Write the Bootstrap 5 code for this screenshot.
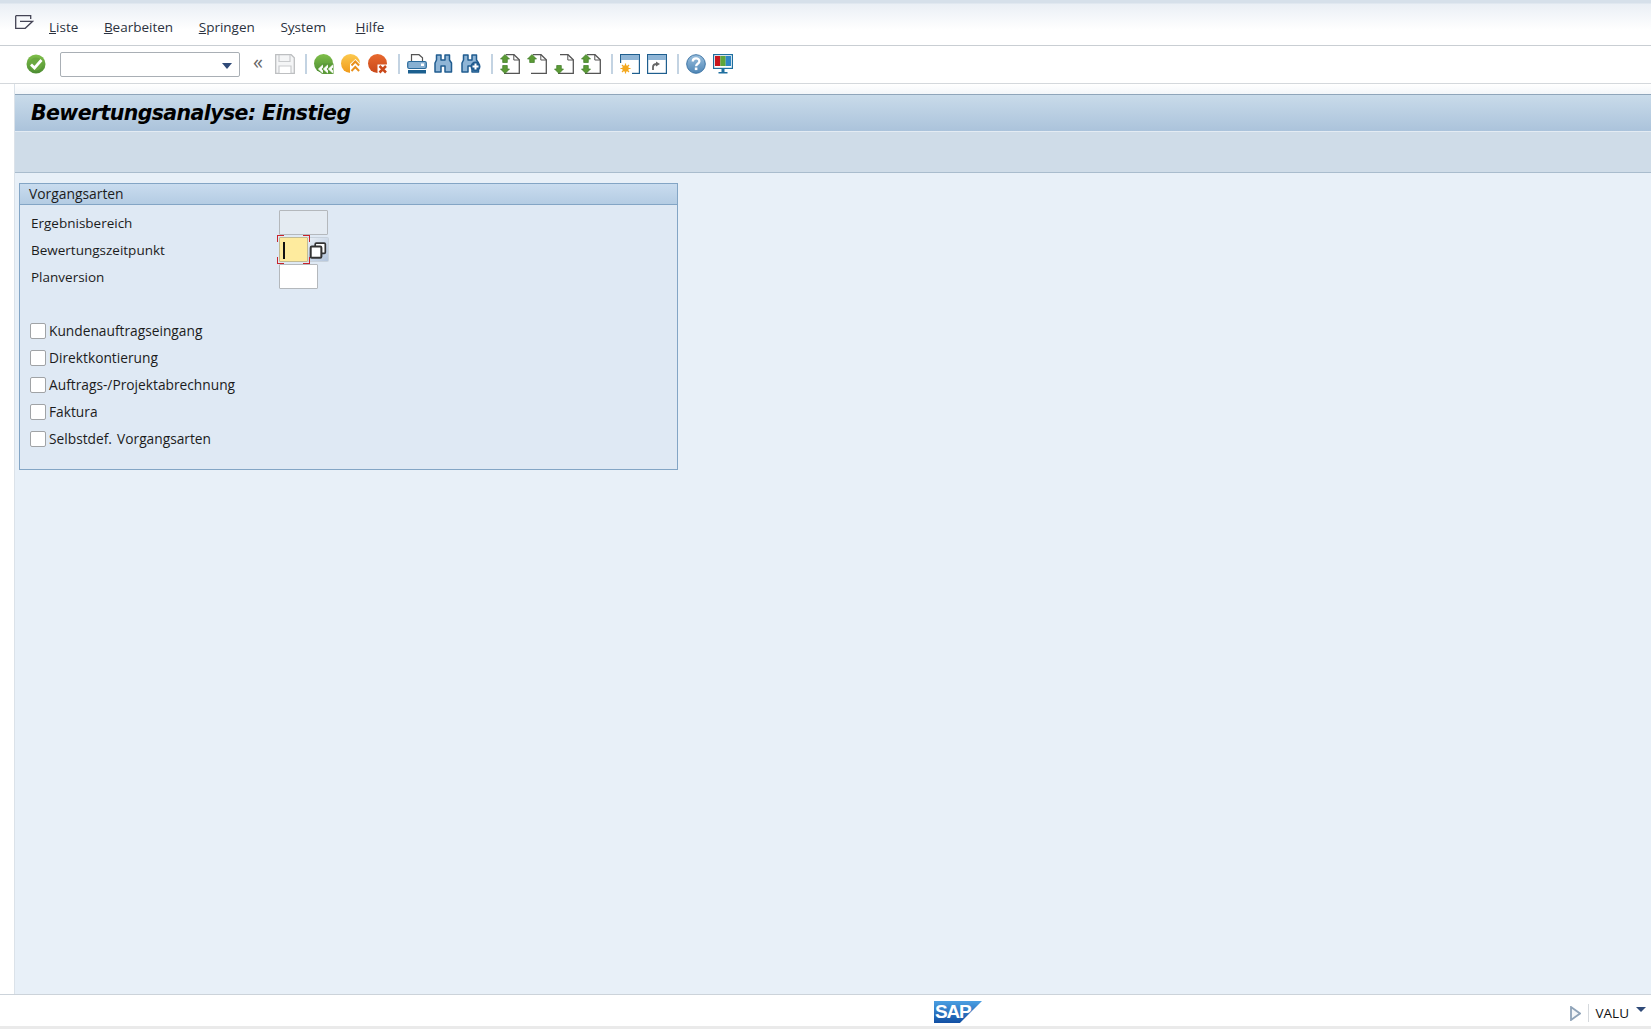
<!DOCTYPE html>
<html lang="de">
<head>
<meta charset="utf-8">
<title>Bewertungsanalyse: Einstieg</title>
<link rel="stylesheet" href="https://cdn.jsdelivr.net/npm/bootstrap@5.3.0/dist/css/bootstrap.min.css">
<style>
html,body{height:100%;margin:0}
body{font-family:"Open Sans","Liberation Sans",sans-serif;font-size:13.5px;color:#1c1c1c;background:#fff;overflow:hidden}
.sap-shell{height:1029px}
.sap-menu{height:46px;flex:none;background:linear-gradient(#d6e0ea 0,#d6e0ea 3px,#eaeff5 4px,#fff 30px);border-bottom:1px solid #c9ced3;padding:15px 0 0 15px}
.sap-menu-ico{width:19px;height:15px;flex:none}
.sap-menu-items{gap:25.6px;margin-left:15px;padding-top:3px;line-height:19px;color:#2b3240}
.sap-tools{height:38px;flex:none;background:#fff;border-bottom:1px solid #d4d8dc;padding:8px 0 0 26px;gap:7px}
.sap-tools svg{width:20px;height:20px;flex:none;display:block}
.sap-combo{width:180px;height:25px;flex:none;border:1px solid #a9afb5;border-radius:2px;background:#fff;margin:-2px 5px 0 7px;position:relative}
.sap-combo i{position:absolute;right:7px;top:10px;border:5.500px solid transparent;border-top:6px solid #2f4a78;border-bottom:0}
.sap-back{width:12px;flex:none;color:#666;font-size:20px;line-height:15px;margin-right:4px;text-align:center}
.sap-sep{width:2px;height:20px;flex:none;background:#c3d3e2;margin-left:3px}
.sap-main{flex:1 1 auto;min-height:0}
.sap-gutter{width:15px;flex:none;background:#fff;border-right:1px solid #dbe2e9}
.sap-work{flex:1 1 auto;min-width:0;background:#e8f0f8;padding-top:10px;background-image:linear-gradient(#fff,#f3f6f9 10px,#f3f6f9 10px);background-repeat:no-repeat;background-size:100% 10px}
.sap-title{height:38px;background:linear-gradient(#c9dbea,#abc3db);border-top:1px solid #8fa5ba;border-bottom:1px solid #e3ebf3;padding-left:16px;font:italic 700 20.5px/36px "DejaVu Sans",sans-serif;color:#000;letter-spacing:-.6px}
.sap-band{height:41px;background:#cfdce8;border-bottom:1px solid #a9bccd}
.sap-group{width:659px;height:287px;margin:10px 0 0 4px;background:#dfe9f4;border:1px solid #83a5c5;border-radius:0}
.sap-group-head{height:21px;background:linear-gradient(#c9dcef,#b4cce3);border-bottom:1px solid #83a5c5;padding:0 0 0 9px;font-size:13.85px;line-height:19px;color:#1c1c1c}
.sap-group-head:first-child{border-radius:0}
.sap-group-body{padding:5px 0 0 11px;flex:none}
.sap-row{height:27px;line-height:26px}
.sap-label{width:248px;flex:none}
.sap-text{font-size:13.75px;word-spacing:1.5px}
.sap-field{height:25px;border:1px solid #b4b8bc;border-radius:1px;background:#fff;padding:0;flex:none;min-height:0;box-shadow:none}
.sap-field-dis{width:49px;background:#e4ebf2}
.sap-field-plan{width:39px}
.sap-field-foc{width:29px;background:#feeb9e;position:relative;border-color:#c2bb92}
.sap-caret{position:absolute;left:3px;top:4px;width:2px;height:17px;background:#111}
.sap-corner{position:absolute;width:7px;height:7px;border:0 solid #c8232c}
.sap-c1{left:-3px;top:-3px;border-width:1px 0 0 1px}
.sap-c2{right:-3px;top:-3px;border-width:1px 1px 0 0}
.sap-c3{left:-3px;bottom:-3px;border-width:0 0 1px 1px}
.sap-c4{right:-3px;bottom:-3px;border-width:0 1px 1px 0}
.sap-f4{width:21px;height:25px;flex:none;background:linear-gradient(135deg,#e8eef5,#b3c5dc);border:1px solid #c8d2dc;border-left:0;border-radius:0 2px 2px 0}
.sap-f4 svg{display:block;margin:4px 0 0 1px}
.sap-gap{height:26px}
.form-check-input.sap-check{width:16px;height:16px;margin:0 3px 0 -1px;flex:none;border:1px solid #a0a3a6;border-radius:2px;background-color:#fff;float:none}
.sap-foot{height:35px;flex:none;background:#fff;border-top:1px solid #ccd3da;position:relative;border-bottom:3px solid #eaeaea}
.sap-logo{position:absolute;left:934px;top:6px;width:48px;height:22px;color:#fff;font:700 19px/22px "Liberation Sans",sans-serif;padding-left:1px;letter-spacing:-1.2px}
.sap-logo::before{content:"";position:absolute;inset:0;background:linear-gradient(#4b9fe2,#114fa3);clip-path:polygon(0 0,100% 0,54% 100%,0 100%)}
.sap-logo span{position:relative}
.sap-status{position:absolute;right:5px;top:8px;gap:7px;line-height:20px;color:#111}
.sap-status svg{display:block}
.sap-vsep{width:1px;height:18px;background:#d5d9dd}
.sap-drop{width:0;height:0;border:5px solid transparent;border-top:5px solid #2f4a78;border-bottom:0;margin-bottom:8px}
</style>
</head>
<body>
<svg width="0" height="0" class="position-absolute">
<defs>
<linearGradient id="gGreen" x1="0" y1="0" x2="0" y2="1"><stop offset="0" stop-color="#7fbf4a"/><stop offset="1" stop-color="#4c8c32"/></linearGradient>
<linearGradient id="gOrange" x1="0" y1="0" x2="0" y2="1"><stop offset="0" stop-color="#fcc94e"/><stop offset="1" stop-color="#f09a1a"/></linearGradient>
<linearGradient id="gRed" x1="0" y1="0" x2="0" y2="1"><stop offset="0" stop-color="#e8692e"/><stop offset="1" stop-color="#c9481a"/></linearGradient>
<linearGradient id="gHelp" x1="0" y1="0" x2="0" y2="1"><stop offset="0" stop-color="#9bc0de"/><stop offset="1" stop-color="#4f86b6"/></linearGradient>
<g id="pageR"><path d="M6 .7h8l5.300 5v13.600H4" fill="#fff" stroke="#555" stroke-width="1.300"/><path d="M13.800 .7v5.300h5.500" fill="none" stroke="#555"/></g>
<g id="arUp"><path d="M5 0.500l4.500 4.500H7.300v3.500H2.700V5H.500z" fill="#5b9a35" stroke="#3c7a25" stroke-width=".7"/></g>
<g id="arDn"><path d="M2.700 .5h4.600V4h2.200L5 8.500.500 4h2.200z" fill="#5b9a35" stroke="#3c7a25" stroke-width=".7"/></g>
<g id="binoBody"><path d="M2.500 1h4.500v5h4V1h4.500v5l2 3v9h-6.500v-6h-4v6H1V9l1.500-3z" fill="#8fb5d6" stroke="#205c90" stroke-width="1.500" stroke-linejoin="round"/></g>
</defs>
</svg>
<div class="sap-shell d-flex flex-column">
  <div class="sap-menu d-flex align-items-start">
    <svg class="sap-menu-ico" viewBox="0 0 19 15"><path d="M.700 .7h15v3.300M.700 .7v12.600h9.500l7.500-7H5" fill="none" stroke="#445" stroke-width="1.300"/></svg>
    <div class="sap-menu-items d-flex">
      <span><u>L</u>iste</span>
      <span><u>B</u>earbeiten</span>
      <span><u>S</u>pringen</span>
      <span class="me-1">S<u>y</u>stem</span>
      <span><u>H</u>ilfe</span>
    </div>
  </div>
  <div class="sap-tools d-flex align-items-start">
    <svg viewBox="0 0 20 20"><circle cx="10" cy="10" r="9.500" fill="url(#gGreen)"/><circle cx="10" cy="10" r="6.500" fill="#6aa83f"/><path d="M5 10.500l3.500 3.500 7-8" fill="none" stroke="#fff" stroke-width="2.800"/></svg>
    <div class="sap-combo"><i></i></div>
    <div class="sap-back">«</div>
    <svg viewBox="0 0 20 20"><path d="M.700 .7h15.500l3.100 3v15.600H.700z" fill="#f4f5f6" stroke="#bdbfc1" stroke-width="1.300"/><path d="M4 1v6.500h11V1" fill="none" stroke="#c9cbcd" stroke-width="1.200"/><path d="M4 19v-7h12v7" fill="#fff" stroke="#c9cbcd" stroke-width="1.200"/></svg>
    <div class="sap-sep"></div>
    <svg viewBox="0 0 20 20"><circle cx="9.500" cy="9.500" r="9.500" fill="url(#gGreen)"/><path d="M3 15l5-5.500h11.500v10.500H8z" fill="#5b9a38"/><path d="M4.500 15l4-3.800v2.500L7 15l1.500 1.300v2.500zM9.500 15l4-3.800v2.500L12 15l1.500 1.300v2.500zM14.500 15l4-3.800v2.500L17 15l1.500 1.300v2.500z" fill="#fff" stroke="#fff" stroke-width=".9"/></svg>
    <svg viewBox="0 0 20 20"><circle cx="9.500" cy="9.500" r="9.500" fill="url(#gOrange)"/><path d="M14.500 5l5 5v10H9V10z" fill="#fff"/><path d="M10.500 11.500l3.800-4 3.800 4M10.500 17l3.800-4 3.800 4" fill="none" stroke="#e88f1a" stroke-width="2"/></svg>
    <svg viewBox="0 0 20 20"><circle cx="9.500" cy="9.500" r="9.500" fill="url(#gRed)"/><path d="M9.500 10.500h10.500v9.500H9.500z" fill="#fff"/><path d="M11.500 12l6.500 6.500M18 12l-6.500 6.500" stroke="#c9481a" stroke-width="2.500"/></svg>
    <div class="sap-sep"></div>
    <svg viewBox="0 0 20 20"><path d="M4.500 7V.700h7.500l3.500 3V7" fill="#fff" stroke="#555" stroke-width="1.200"/><rect x=".700" y="7.500" width="18.600" height="7" rx="1.500" fill="#87b0d2" stroke="#2a6a9c" stroke-width="1.200"/><rect x="14" y="9.500" width="3" height="2.500" fill="#fff"/><rect x="1" y="16" width="18" height="3.500" fill="#1b5f8f"/></svg>
    <svg viewBox="0 0 20 20"><use href="#binoBody"/></svg>
    <svg viewBox="0 0 20 20"><use href="#binoBody"/><circle cx="14.500" cy="12.500" r="5" fill="#205c90"/><path d="M14.500 9.500v6M11.500 12.500h6" stroke="#fff" stroke-width="2"/></svg>
    <div class="sap-sep"></div>
    <svg viewBox="0 0 20 20"><use href="#pageR"/><use href="#arUp"/><use href="#arDn" y="11"/></svg>
    <svg viewBox="0 0 20 20"><use href="#pageR"/><use href="#arUp"/></svg>
    <svg viewBox="0 0 20 20"><use href="#pageR"/><use href="#arDn" y="11"/></svg>
    <svg viewBox="0 0 20 20"><use href="#pageR"/><use href="#arUp"/><use href="#arDn" y="11"/></svg>
    <div class="sap-sep"></div>
    <svg viewBox="0 0 20 20"><rect x=".600" y=".600" width="18.800" height="18.800" fill="#fff" stroke="#1f5f8f" stroke-width="1.200"/><rect x="1" y="1" width="18" height="5" fill="#8fb5d6"/><rect x="0" y="9" width="12" height="11" fill="#fff"/><circle cx="5.500" cy="14.500" r="3.200" fill="#f4a81e"/><path d="M5.500 9.500v10M.500 14.500h10M2 11l7 7M9 11l-7 7" stroke="#f4a81e" stroke-width="1.200"/></svg>
    <svg viewBox="0 0 20 20"><rect x=".600" y=".600" width="18.800" height="18.800" fill="#fff" stroke="#1f5f8f" stroke-width="1.200"/><rect x="1" y="1" width="18" height="5" fill="#8fb5d6"/><path d="M6 16v-3c0-2 1.500-3 4-3" fill="none" stroke="#666" stroke-width="1.800"/><path d="M9 7.500l4 2.500-4 2.500z" fill="#666"/></svg>
    <div class="sap-sep"></div>
    <svg viewBox="0 0 20 20"><circle cx="10" cy="10" r="9.300" fill="url(#gHelp)" stroke="#3f76a6"/><path d="M6.800 7.500c0-4 6.600-4 6.600-.2 0 2.600-3.300 2.400-3.300 5" fill="none" stroke="#fff" stroke-width="2.300"/><rect x="8.800" y="13.500" width="2.600" height="2.600" fill="#fff"/></svg>
    <svg viewBox="0 0 20 20"><rect x=".600" y=".600" width="18.800" height="13.800" fill="#fff" stroke="#1f6f9f" stroke-width="1.200"/><rect x="2" y="2" width="5.300" height="10" fill="#c8161d"/><rect x="7.300" y="2" width="5.400" height="10" fill="#5fa53a"/><rect x="12.700" y="2" width="5.300" height="10" fill="#2f86c4"/><path d="M8.500 15h3v3h3v1.500h-9V18h3z" fill="#1f6f9f"/></svg>
  </div>
  <div class="sap-main d-flex">
    <div class="sap-gutter"></div>
    <div class="sap-work">
      <div class="sap-title">Bewertungsanalyse: Einstieg</div>
      <div class="sap-band"></div>
      <div class="card sap-group">
        <div class="card-header sap-group-head">Vorgangsarten</div>
        <div class="card-body sap-group-body">
          <div class="sap-row d-flex"><span class="sap-label">Ergebnisbereich</span><div class="form-control sap-field sap-field-dis"></div></div>
          <div class="sap-row d-flex"><span class="sap-label">Bewertungszeitpunkt</span><div class="form-control sap-field sap-field-foc"><span class="sap-caret"></span><span class="sap-corner sap-c1"></span><span class="sap-corner sap-c2"></span><span class="sap-corner sap-c3"></span><span class="sap-corner sap-c4"></span></div><div class="sap-f4"><svg width="18" height="17" viewBox="0 0 16 15"><rect x="5.500" y="1" width="9" height="9" rx="1" fill="#fff" stroke="#333" stroke-width="1.500"/><rect x="1.500" y="4" width="9.500" height="10" rx="1" fill="#fff" stroke="#333" stroke-width="1.800"/></svg></div></div>
          <div class="sap-row d-flex"><span class="sap-label">Planversion</span><div class="form-control sap-field sap-field-plan"></div></div>
          <div class="sap-gap"></div>
          <div class="sap-row d-flex align-items-center"><input class="form-check-input sap-check" type="checkbox" aria-label="Kundenauftragseingang"><span class="sap-text">Kundenauftragseingang</span></div>
          <div class="sap-row d-flex align-items-center"><input class="form-check-input sap-check" type="checkbox" aria-label="Direktkontierung"><span class="sap-text">Direktkontierung</span></div>
          <div class="sap-row d-flex align-items-center"><input class="form-check-input sap-check" type="checkbox" aria-label="Auftrags-/Projektabrechnung"><span class="sap-text">Auftrags-/Projektabrechnung</span></div>
          <div class="sap-row d-flex align-items-center"><input class="form-check-input sap-check" type="checkbox" aria-label="Faktura"><span class="sap-text">Faktura</span></div>
          <div class="sap-row d-flex align-items-center"><input class="form-check-input sap-check" type="checkbox" aria-label="Selbstdef. Vorgangsarten"><span class="sap-text">Selbstdef. Vorgangsarten</span></div>
        </div>
      </div>
    </div>
  </div>
  <div class="sap-foot">
    <div class="sap-logo"><span>SAP</span></div>
    <div class="sap-status d-flex align-items-center">
      <svg width="11" height="15" viewBox="0 0 11 15"><path d="M1 1l9 6.500L1 14z" fill="#f4f6f8" stroke="#8fa3b8" stroke-width="1.800"/></svg>
      <span class="sap-vsep"></span>
      <span>VALU</span>
      <span class="sap-drop"></span>
    </div>
  </div>
</div>
</body>
</html>
